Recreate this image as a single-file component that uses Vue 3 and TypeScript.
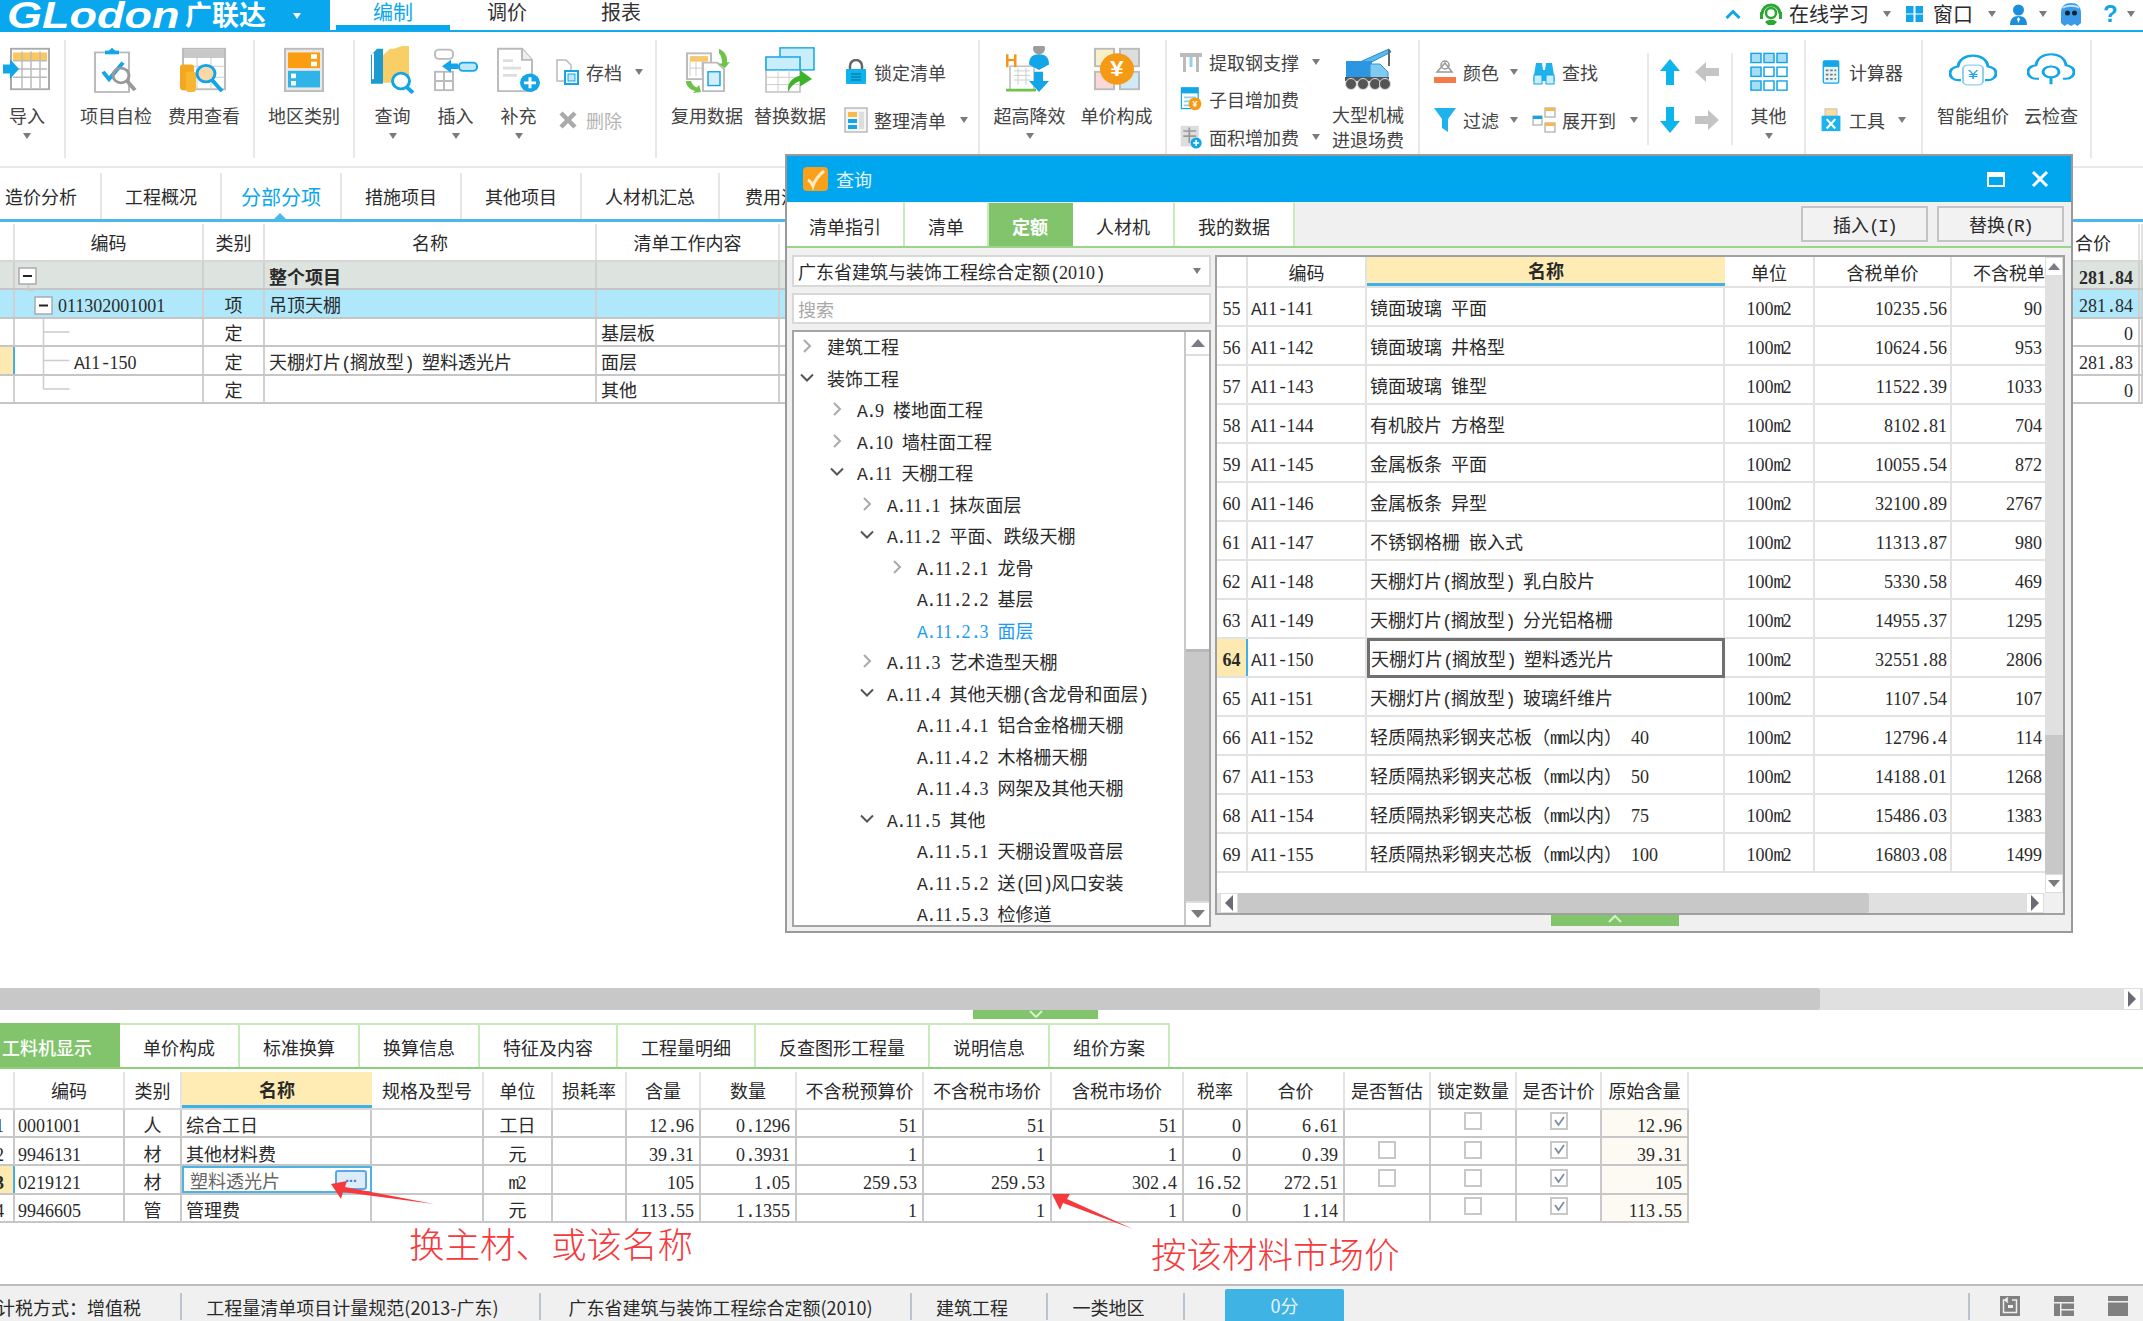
<script setup lang="ts">
import { h } from 'vue'

const Tx = (p: { t: string }) =>
  h(
    'span',
    p.t
      .split(/([\x20-\x7e]+)/)
      .filter((s) => s.length > 0)
      .flatMap((s) =>
        /^[\x20-\x7e]+$/.test(s)
          ? s
              .split(/(\d+)/)
              .filter((d) => d.length > 0)
              .map((d) => h('span', { class: /^\d/.test(d) ? 'dig' : 'lat' }, d))
          : [h('span', s)],
      ),
  )
Tx.props = ['t']

const subTabs = ['造价分析', '工程概况', '分部分项', '措施项目', '其他项目', '人材机汇总', '费用汇总']

const mainRows = [
  { cls: 'r-total', code: '', kind: '', name: '整个项目', work: '', sum: '281.84', mark: false },
  { cls: 'r-sel', code: '011302001001', kind: '项', name: '吊顶天棚', work: '', sum: '281.84', mark: false },
  { cls: '', code: '', kind: '定', name: '', work: '基层板', sum: '0', mark: false },
  { cls: '', code: 'A11-150', kind: '定', name: '天棚灯片(搁放型) 塑料透光片', work: '面层', sum: '281.83', mark: true },
  { cls: '', code: '', kind: '定', name: '', work: '其他', sum: '0', mark: false },
]

const dlgTabs = ['清单指引', '清单', '定额', '人材机', '我的数据']

const tree = [
  { t: '建筑工程', l: 0, c: 'r' },
  { t: '装饰工程', l: 0, c: 'd' },
  { t: 'A.9 楼地面工程', l: 1, c: 'r' },
  { t: 'A.10 墙柱面工程', l: 1, c: 'r' },
  { t: 'A.11 天棚工程', l: 1, c: 'd' },
  { t: 'A.11.1 抹灰面层', l: 2, c: 'r' },
  { t: 'A.11.2 平面、跌级天棚', l: 2, c: 'd' },
  { t: 'A.11.2.1 龙骨', l: 3, c: 'r' },
  { t: 'A.11.2.2 基层', l: 3, c: '' },
  { t: 'A.11.2.3 面层', l: 3, c: '', on: true },
  { t: 'A.11.3 艺术造型天棚', l: 2, c: 'r' },
  { t: 'A.11.4 其他天棚(含龙骨和面层)', l: 2, c: 'd' },
  { t: 'A.11.4.1 铝合金格栅天棚', l: 3, c: '' },
  { t: 'A.11.4.2 木格栅天棚', l: 3, c: '' },
  { t: 'A.11.4.3 网架及其他天棚', l: 3, c: '' },
  { t: 'A.11.5 其他', l: 2, c: 'd' },
  { t: 'A.11.5.1 天棚设置吸音层', l: 3, c: '' },
  { t: 'A.11.5.2 送(回)风口安装', l: 3, c: '' },
  { t: 'A.11.5.3 检修道', l: 3, c: '' },
]

const quotaRows = [
  ['55', 'A11-141', '镜面玻璃 平面', '10235.56', '90'],
  ['56', 'A11-142', '镜面玻璃 井格型', '10624.56', '953'],
  ['57', 'A11-143', '镜面玻璃 锥型', '11522.39', '1033'],
  ['58', 'A11-144', '有机胶片 方格型', '8102.81', '704'],
  ['59', 'A11-145', '金属板条 平面', '10055.54', '872'],
  ['60', 'A11-146', '金属板条 异型', '32100.89', '2767'],
  ['61', 'A11-147', '不锈钢格栅 嵌入式', '11313.87', '980'],
  ['62', 'A11-148', '天棚灯片(搁放型) 乳白胶片', '5330.58', '469'],
  ['63', 'A11-149', '天棚灯片(搁放型) 分光铝格栅', '14955.37', '1295'],
  ['64', 'A11-150', '天棚灯片(搁放型) 塑料透光片', '32551.88', '2806'],
  ['65', 'A11-151', '天棚灯片(搁放型) 玻璃纤维片', '1107.54', '107'],
  ['66', 'A11-152', '轻质隔热彩钢夹芯板（mm以内） 40', '12796.4', '114'],
  ['67', 'A11-153', '轻质隔热彩钢夹芯板（mm以内） 50', '14188.01', '1268'],
  ['68', 'A11-154', '轻质隔热彩钢夹芯板（mm以内） 75', '15486.03', '1383'],
  ['69', 'A11-155', '轻质隔热彩钢夹芯板（mm以内） 100', '16803.08', '1499'],
]

const lowerTabs = ['工料机显示', '单价构成', '标准换算', '换算信息', '特征及内容', '工程量明细', '反查图形工程量', '说明信息', '组价方案']

const resHead = ['', '编码', '类别', '名称', '规格及型号', '单位', '损耗率', '含量', '数量', '不含税预算价', '不含税市场价', '含税市场价', '税率', '合价', '是否暂估', '锁定数量', '是否计价', '原始含量']

const resRows = [
  { no: '1', code: '0001001', kind: '人', name: '综合工日', unit: '工日', nums: ['12.96', '0.1296', '51', '51', '51', '0', '6.61'], est: false, orig: '12.96', sel: false },
  { no: '2', code: '9946131', kind: '材', name: '其他材料费', unit: '元', nums: ['39.31', '0.3931', '1', '1', '1', '0', '0.39'], est: true, orig: '39.31', sel: false },
  { no: '3', code: '0219121', kind: '材', name: '塑料透光片', unit: 'm2', nums: ['105', '1.05', '259.53', '259.53', '302.4', '16.52', '272.51'], est: true, orig: '105', sel: true },
  { no: '4', code: '9946605', kind: '管', name: '管理费', unit: '元', nums: ['113.55', '1.1355', '1', '1', '1', '0', '1.14'], est: false, orig: '113.55', sel: false },
]
</script>

<template>
  <div class="app">
    <!-- title bar -->
    <header class="topbar">
      <div class="logo">
        <span class="logo-en">GLodon</span>
        <span class="logo-cn">广联达</span>
        <i class="tri white"></i>
      </div>
      <div class="maintab on">编制</div>
      <div class="maintab">调价</div>
      <div class="maintab">报表</div>
      <div class="tr">
        <svg class="g0" width="16" height="10" viewBox="0 0 16 10"><path d="M1.5 9 8 2.5 14.500 9" fill="none" stroke="#12a5e8" stroke-width="3"/></svg>
        <svg class="g18" width="24" height="24" viewBox="0 0 24 24"><path d="M3 12a9 9 0 0 1 18 0" fill="none" stroke="#2aa832" stroke-width="3"/><circle cx="12" cy="11" r="5" fill="none" stroke="#2aa832" stroke-width="2.500"/><path d="M6 20c3-3 9-3 12 0l-3 3H9z" fill="#2aa832"/><rect x="1" y="10" width="3" height="7" fill="#2aa832"/><rect x="20" y="10" width="3" height="7" fill="#2aa832"/></svg>
        <span class="g6 trtext">在线学习</span>
        <i class="tri g14"></i>
        <svg class="g15" width="17" height="16" viewBox="0 0 17 16"><rect width="7.500" height="7.500" fill="#12a5e8"/><rect x="9.500" width="7.500" height="7.500" fill="#12a5e8"/><rect y="8.500" width="7.500" height="7.500" fill="#12a5e8"/><rect x="9.500" y="8.500" width="7.500" height="7.500" fill="#12a5e8"/></svg>
        <span class="g10 trtext">窗口</span>
        <i class="tri g15"></i>
        <svg class="g13" width="19" height="21" viewBox="0 0 19 21"><circle cx="9.500" cy="6" r="5.500" fill="#1b8fdd"/><path d="M1 21c0-6 3-9 8.500-9S18 15 18 21z" fill="#1b8fdd"/><path d="M9.500 13l-1.500 2 1.500 4 1.500-4z" fill="#fff"/></svg>
        <i class="tri g11"></i>
        <svg class="g12" width="24" height="25" viewBox="0 0 24 25"><path d="M2 11C2 4 6 1 12 1s10 3 10 10v10l-3.500 3-3-2-3.500 2-3.500-2-3 2L2 21z" fill="#3c9be8"/><circle cx="8.500" cy="11" r="2.500" fill="#123"/><circle cx="15.500" cy="11" r="2.500" fill="#123"/><path d="M4 6c3-3 13-3 16 0" stroke="#bfe0fa" stroke-width="2" fill="none"/></svg>
        <span class="g20 qmark">?</span>
        <i class="tri g14"></i>
      </div>
    </header>

    <!-- ribbon -->
    <section class="ribbon">
      <div class="grp w66">
        <div class="big w54">
          <svg width="48" height="52" viewBox="0 0 48 52"><rect x="8" y="3" width="38" height="44" fill="#fff" stroke="#aaa" stroke-width="2"/><rect x="10" y="7" width="34" height="9" fill="#fbc75e"/><path d="M10 16h34M10 25h34M10 34h34M19 6v40M28 6v40M37 6v40" stroke="#bbb" stroke-width="1.500"/><path d="M0 20h7v-6l9 11-9 11v-6H0z" fill="#12a5e8"/></svg>
          <span class="lb">导入</span><i class="tri"></i>
        </div>
      </div>
      <div class="grp w189 pl6">
        <div class="big w88">
          <svg width="50" height="52" viewBox="0 0 50 52"><rect x="4" y="7" width="34" height="43" fill="#fff" stroke="#bbb" stroke-width="2"/><path d="M16 7l5-5 5 5z" fill="#12a5e8"/><rect x="14" y="5" width="14" height="4" fill="#12a5e8"/><path d="M12 28l6 8 14-18" fill="none" stroke="#12a5e8" stroke-width="4"/><circle cx="30" cy="32" r="8" fill="none" stroke="#999" stroke-width="3"/><path d="M36 38l8 10" stroke="#999" stroke-width="4"/></svg>
          <span class="lb">项目自检</span>
        </div>
        <div class="big w88">
          <svg width="50" height="52" viewBox="0 0 50 52"><rect x="4" y="3" width="42" height="44" fill="#fff" stroke="#bbb" stroke-width="2"/><rect x="5" y="4" width="40" height="9" fill="#c8c8c8"/><path d="M4 22h42M4 34h42M18 13v34M32 13v34" stroke="#ccc"/><rect x="1" y="20" width="14" height="28" rx="3" fill="#f4a81f"/><rect x="7" y="28" width="10" height="22" rx="3" fill="#f8b730"/><circle cx="27" cy="30" r="9" fill="#fbd8a8" stroke="#12a5e8" stroke-width="3"/><path d="M33 37l10 12" stroke="#12a5e8" stroke-width="4"/></svg>
          <span class="lb">费用查看</span>
        </div>
      </div>
      <div class="grp w100">
        <div class="big w100i">
          <svg width="40" height="52" viewBox="0 0 40 52"><rect x="1" y="3" width="38" height="46" fill="#e8e8e8" stroke="#bbb" stroke-width="2"/><rect x="4" y="7" width="32" height="17" fill="#fb9d10"/><rect x="27" y="9" width="6" height="5" fill="#fff"/><rect x="27" y="17" width="6" height="5" fill="#fff"/><rect x="4" y="27" width="32" height="18" fill="#2fb4e8"/><rect x="7" y="30" width="5" height="5" fill="#fff"/><rect x="7" y="38" width="5" height="5" fill="#fff"/></svg>
          <span class="lb">地区类别</span>
        </div>
      </div>
      <div class="grp w302 pl6">
        <div class="big w63">
          <svg width="48" height="52" viewBox="0 0 48 52"><path d="M2 10 8 3h6v38H2z" fill="#1d9bd0"/><rect x="3" y="8" width="2" height="28" fill="#fff"/><path d="M14 10l7-7h4l8-3h7v40H14z" fill="#f7cf66"/><circle cx="32" cy="38" r="8.500" fill="#fff" stroke="#12a5e8" stroke-width="3"/><path d="M38 45l6 6" stroke="#12a5e8" stroke-width="4"/></svg>
          <span class="lb">查询</span><i class="tri"></i>
        </div>
        <div class="big w63">
          <svg width="46" height="52" viewBox="0 0 46 52"><rect x="2" y="4" width="18" height="10" rx="4" fill="#fff" stroke="#bbb" stroke-width="2"/><rect x="2" y="28" width="18" height="20" fill="#fff" stroke="#bbb" stroke-width="2"/><path d="M2 38h18M11 28v20" stroke="#bbb" stroke-width="2"/><rect x="26" y="18" width="18" height="9" rx="4" fill="#bfe8fa" stroke="#12a5e8" stroke-width="2"/><path d="M9 22l9-7v4h7v6h-7v4z" fill="#12a5e8"/></svg>
          <span class="lb">插入</span><i class="tri"></i>
        </div>
        <div class="big w63">
          <svg width="46" height="52" viewBox="0 0 46 52"><path d="M2 3h24l10 12v34H2z" fill="#fff" stroke="#bbb" stroke-width="2"/><path d="M26 3v12h10" fill="#eee" stroke="#bbb" stroke-width="2"/><path d="M7 16h10M7 24h18M7 32h14" stroke="#ddd" stroke-width="3"/><circle cx="34" cy="40" r="10" fill="#12a5e8"/><path d="M34 34v12M28 40h12" stroke="#fff" stroke-width="3"/></svg>
          <span class="lb">补充</span><i class="tri"></i>
        </div>
        <div class="col ml6">
          <div class="sm">
            <span class="ic"><svg width="24" height="26" viewBox="0 0 24 26"><path d="M1 1h9l5 5v16H1z" fill="#fff" stroke="#bbb" stroke-width="1.500"/><rect x="9" y="12" width="13" height="13" fill="#fff" stroke="#12a5e8" stroke-width="2"/><rect x="12" y="15" width="7" height="7" fill="#bfe8fa" stroke="#12a5e8"/></svg></span>
            <span>存档</span><i class="tri ml12"></i>
          </div>
          <div class="sm dis">
            <span class="ic"><svg width="20" height="20" viewBox="0 0 20 20"><path d="M3 3l14 14M17 3 3 17" stroke="#aaa" stroke-width="4.500"/></svg></span>
            <span>删除</span>
          </div>
        </div>
      </div>
      <div class="grp w323 pl8">
        <div class="big w83">
          <svg width="52" height="52" viewBox="0 0 52 52"><rect x="6" y="8" width="24" height="28" fill="#fff" stroke="#bbb" stroke-width="2"/><rect x="9" y="11" width="18" height="6" fill="#fbc75e"/><path d="M9 17v16M15 11v22M21 11v22M9 24h18" stroke="#ccc"/><path d="M22 18h14l7 7v24H22z" fill="#fff" stroke="#bbb" stroke-width="2"/><rect x="27" y="28" width="12" height="15" fill="#d5effa" stroke="#12a5e8" stroke-width="1.500"/><path d="M38 3c6 3 9 9 8 15l3-1-5 7-7-5 4 0c0-5-1-9-3-11z" fill="#6fc24a"/><path d="M5 38c0 5 3 9 9 11l-2 2 8-1-2-8-2 3c-3-1-5-4-6-7z" fill="#6fc24a"/></svg>
          <span class="lb">复用数据</span>
        </div>
        <div class="big w83">
          <svg width="52" height="52" viewBox="0 0 52 52"><rect x="16" y="2" width="34" height="24" fill="#c8edfb" stroke="#12a5e8" stroke-width="1.500"/><rect x="2" y="12" width="34" height="38" fill="#fff" stroke="#bbb" stroke-width="1.500"/><rect x="2" y="12" width="34" height="14" fill="#c8edfb" stroke="#12a5e8" stroke-width="1.500"/><path d="M2 34h34M2 42h34M14 26v24M25 26v24" stroke="#ccc"/><path d="M24 50c-1-9 3-15 12-18v-6l12 10-12 8v-6c-4 1-9 5-12 12z" fill="#3db32a"/></svg>
          <span class="lb">替换数据</span>
        </div>
        <div class="col ml12">
          <div class="sm">
            <span class="ic"><svg width="22" height="26" viewBox="0 0 22 26"><path d="M5 11V7a6 6 0 0 1 12 0v4" fill="none" stroke="#666" stroke-width="2.500"/><rect x="1" y="10" width="20" height="15" rx="1" fill="#0eb4ec"/><path d="M6 15h10M6 18h10M6 21h10" stroke="#09669a"/></svg></span>
            <span>锁定清单</span>
          </div>
          <div class="sm">
            <span class="ic"><svg width="24" height="26" viewBox="0 0 24 26"><rect x="1" y="1" width="22" height="24" fill="#f5f5f5" stroke="#bbb" stroke-width="1.500"/><rect x="4" y="5" width="9" height="5" fill="#f8b84a"/><rect x="4" y="12" width="9" height="4" fill="#12a5e8"/><rect x="4" y="18" width="9" height="4" fill="#12a5e8"/><rect x="15" y="5" width="5" height="17" fill="#ddd"/></svg></span>
            <span>整理清单</span><i class="tri ml14"></i>
          </div>
        </div>
      </div>
      <div class="grp w187 pl6">
        <div class="big w87">
          <svg width="48" height="52" viewBox="0 0 48 52"><rect x="4" y="22" width="24" height="26" fill="#fff" stroke="#bbb" stroke-width="1.500"/><path d="M8 27h16M8 32h16M8 37h16M12 24v18M20 24v18" stroke="#ccc"/><path d="M0 48h30" stroke="#6fc24a" stroke-width="3"/><rect x="0" y="9" width="2.500" height="14" fill="#f5961c"/><rect x="8" y="9" width="2.500" height="14" fill="#f5961c"/><rect x="0" y="14" width="10" height="2.500" fill="#f5961c"/><circle cx="33" cy="3" r="6" fill="#9c9c9c"/><path d="M23 20c0-8 4-11 10-11s10 3 10 11l-10 6z" fill="#12a5e8"/><path d="M28 28h9v10h6l-10 12-10-12h5z" fill="#12a5e8"/></svg>
          <span class="lb">超高降效</span><i class="tri"></i>
        </div>
        <div class="big w87">
          <svg width="46" height="52" viewBox="0 0 46 52"><rect x="1" y="3" width="19" height="19" fill="#f8eec8" stroke="#bbb" stroke-width="2"/><rect x="26" y="3" width="19" height="19" fill="#ddd" stroke="#bbb" stroke-width="2"/><rect x="1" y="28" width="19" height="19" fill="#fad8d8" stroke="#bbb" stroke-width="2"/><rect x="26" y="28" width="19" height="19" fill="#d0eaf5" stroke="#bbb" stroke-width="2"/><circle cx="23" cy="25" r="17" fill="#f59a14"/><text x="23" y="33" text-anchor="middle" font-size="24" font-weight="700" fill="#fff" font-family="Liberation Sans, sans-serif">¥</text></svg>
          <span class="lb">单价构成</span>
        </div>
      </div>
      <div class="grp w253 pl12">
        <div class="col three">
          <div class="sm s3">
            <span class="ic"><svg width="24" height="24" viewBox="0 0 24 24"><path d="M1 3h22v4H1z" fill="#bbb"/><rect x="4" y="7" width="3" height="15" fill="#bbb"/><rect x="17" y="7" width="3" height="15" fill="#bbb"/><rect x="10.500" y="7" width="3" height="10" fill="#8fd0ef"/></svg></span>
            <span>提取钢支撑</span><i class="tri ml13"></i>
          </div>
          <div class="sm s3">
            <span class="ic"><svg width="26" height="24" viewBox="0 0 26 30"><rect x="1" y="1" width="21" height="26" fill="#fff" stroke="#12a5e8" stroke-width="1.500"/><rect x="1" y="1" width="21" height="7" fill="#12a5e8"/><path d="M4 13h15M4 18h15M4 23h8" stroke="#8fd0ef" stroke-width="2"/><circle cx="18" cy="21" r="8" fill="#f59a14"/><text x="18" y="25" text-anchor="middle" font-size="11" font-weight="700" fill="#fff" font-family="Liberation Sans, sans-serif">¥</text></svg></span>
            <span>子目增加费</span>
          </div>
          <div class="sm s3">
            <span class="ic"><svg width="26" height="24" viewBox="0 0 26 28"><rect x="1" y="1" width="21" height="24" fill="#ddd"/><path d="M4 7h15M4 13h15M11 3v18" stroke="#999" stroke-width="2"/><circle cx="19" cy="21" r="6.500" fill="#12a5e8"/><path d="M19 17.500v7M15.500 21h7" stroke="#fff" stroke-width="2"/></svg></span>
            <span>面积增加费</span><i class="tri ml13"></i>
          </div>
        </div>
        <div class="big w88 mla mr6 crane">
          <svg width="50" height="44" viewBox="0 0 50 44"><path d="M17 14 46 1l2 3-29 15z" fill="#5fb8e8" stroke="#1b8fdd"/><rect x="45" y="2" width="2" height="16" fill="#666"/><rect x="3" y="13" width="26" height="17" fill="#2d96e0"/><path d="M27 16h10l8 8v7H27z" fill="#7ecaf2" stroke="#2d96e0"/><rect x="2" y="29" width="44" height="4" fill="#555"/><circle cx="8" cy="36" r="5.500" fill="#555" stroke="#ddd"/><circle cx="20" cy="36" r="5.500" fill="#555" stroke="#ddd"/><circle cx="32" cy="36" r="5.500" fill="#555" stroke="#ddd"/><circle cx="42" cy="36" r="5.500" fill="#555" stroke="#ddd"/></svg>
          <span class="lb lb2">大型机械<br />进退场费</span>
        </div>
      </div>
      <div class="grp w386 pl13">
        <div class="col w99">
          <div class="sm">
            <span class="ic"><svg width="24" height="24" viewBox="0 0 24 24"><path d="M4 12 12 3l7 9z" fill="#fff" stroke="#999" stroke-width="1.500"/><circle cx="12" cy="5" r="4" fill="none" stroke="#999" stroke-width="1.500"/><path d="M1 17h22v6H1z" fill="#f47a4a"/></svg></span>
            <span>颜色</span><i class="tri ml11"></i>
          </div>
          <div class="sm">
            <span class="ic"><svg width="22" height="26" viewBox="0 0 22 26"><path d="M0 1h22l-8 11v13l-6-4v-9z" fill="#1fb3ee"/></svg></span>
            <span>过滤</span><i class="tri ml11"></i>
          </div>
        </div>
        <div class="col w115">
          <div class="sm">
            <span class="ic"><svg width="24" height="26" viewBox="0 0 24 26"><path d="M1 22 4 4h6l1 7h2l1-7h6l3 18z" fill="#1fb3ee"/><rect x="2" y="16" width="8" height="9" fill="#c8edfb" stroke="#12a5e8"/><rect x="14" y="16" width="8" height="9" fill="#c8edfb" stroke="#12a5e8"/></svg></span>
            <span>查找</span>
          </div>
          <div class="sm">
            <span class="ic"><svg width="24" height="28" viewBox="0 0 24 28"><rect x="1" y="10" width="9" height="9" fill="#fff" stroke="#999"/><rect x="13" y="2" width="10" height="9" fill="#fff" stroke="#999"/><rect x="13" y="2" width="10" height="3" fill="#f8b84a"/><rect x="13" y="17" width="10" height="9" fill="#fff" stroke="#999"/><rect x="13" y="17" width="10" height="3" fill="#f8b84a"/><rect x="1" y="10" width="9" height="3" fill="#12a5e8"/></svg></span>
            <span>展开到</span><i class="tri ml14"></i>
          </div>
        </div>
        <div class="vsep"></div>
        <div class="arrows">
          <svg width="20" height="26" viewBox="0 0 20 26"><path d="M10 0l10 12h-6v14H6V12H0z" fill="#0eb4ec"/></svg>
          <svg width="24" height="20" viewBox="0 0 24 20"><path d="M0 10 11 0v6h13v8H11v6z" fill="#c4c4c4"/></svg>
          <svg width="20" height="26" viewBox="0 0 20 26"><path d="M10 26 0 14h6V0h8v14h6z" fill="#0eb4ec"/></svg>
          <svg width="24" height="20" viewBox="0 0 24 20"><path d="M24 10 13 0v6H0v8h13v6z" fill="#c4c4c4"/></svg>
        </div>
        <div class="vsep"></div>
        <div class="big w71 wide-grid">
          <svg width="38" height="52" viewBox="0 0 38 52"><g fill="none" stroke="#12a5e8" stroke-width="1.500"><rect x="1" y="8" width="10" height="10" fill="#a9dcf5"/><rect x="14" y="8" width="10" height="10" fill="#a9dcf5"/><rect x="27" y="8" width="10" height="10" fill="#a9dcf5"/><rect x="1" y="23" width="10" height="10" fill="#a9dcf5"/><rect x="14" y="23" width="10" height="10"/><rect x="27" y="23" width="10" height="10"/><rect x="1" y="38" width="10" height="10" fill="#a9dcf5"/><rect x="14" y="38" width="10" height="10"/><rect x="27" y="38" width="10" height="10"/></g></svg>
          <span class="lb">其他</span><i class="tri"></i>
        </div>
      </div>
      <div class="grp w117 pl13">
        <div class="col">
          <div class="sm">
            <span class="ic"><svg width="20" height="24" viewBox="0 0 20 28"><rect x="1" y="1" width="18" height="26" rx="2" fill="#e3f4fc" stroke="#12a5e8" stroke-width="1.500"/><rect x="1" y="1" width="18" height="7" fill="#12a5e8"/><path d="M4 12h3M9 12h3M14 12h2M4 17h3M9 17h3M14 17h2M4 22h3M9 22h3M14 22h2" stroke="#777" stroke-width="2"/></svg></span>
            <span>计算器</span>
          </div>
          <div class="sm">
            <span class="ic"><svg width="24" height="24" viewBox="0 0 24 28"><rect x="5" y="1" width="14" height="12" fill="#f9dca0" stroke="#bbb"/><rect x="1" y="9" width="22" height="18" fill="#1fb3ee"/><path d="M7 13l10 11M17 13 7 24" stroke="#fff" stroke-width="2.500"/></svg></span>
            <span>工具</span><i class="tri ml13"></i>
          </div>
        </div>
      </div>
      <div class="grp w169 pl11">
        <div class="big w78">
          <svg width="48" height="52" viewBox="0 0 48 52"><g transform="translate(0 6) scale(1 .74)"><path d="M12 42H9C4 42 1 37 1 32c0-6 4-9 8-10C10 12 16 6 24 6s14 6 15 16c4 1 8 4 8 10 0 5-3 10-8 10h-3" fill="none" stroke="#12a5e8" stroke-width="3"/><rect x="14" y="20" width="20" height="29" rx="5" fill="#fff" stroke="#8fd0ef" stroke-width="2"/><text x="24" y="41" text-anchor="middle" font-size="18" fill="#12a5e8" font-family="Liberation Sans, sans-serif">¥</text></g></svg>
          <span class="lb">智能组价</span>
        </div>
        <div class="big w78">
          <svg width="48" height="52" viewBox="0 0 48 52"><g transform="translate(0 6) scale(1 .74)"><path d="M12 40H9C4 40 1 35 1 30c0-6 4-9 8-10C10 10 16 4 24 4s14 6 15 16c4 1 8 4 8 10 0 5-3 10-8 10h-3" fill="none" stroke="#12a5e8" stroke-width="3"/><circle cx="24" cy="30" r="8" fill="#fff" stroke="#12a5e8" stroke-width="3"/><path d="M24 38v10" stroke="#12a5e8" stroke-width="3"/></g></svg>
          <span class="lb">云检查</span>
        </div>
      </div>
    </section>

    <!-- view tabs -->
    <nav class="subtabs">
      <div v-for="(t, i) in subTabs" :key="t" class="subtab" :class="'st' + i">{{ t }}</div>
    </nav>

    <!-- main table -->
    <main class="main-area">
      <div class="mt-head mt-grid">
        <div class="c"></div><div class="c ctr">编码</div><div class="c ctr">类别</div><div class="c ctr">名称</div><div class="c ctr">清单工作内容</div><div class="c"></div><div class="c hsum">合价</div><div class="c"></div>
      </div>
      <div v-for="(r, i) in mainRows" :key="i" class="mt-row mt-grid" :class="r.cls">
        <div class="c" :class="{ marker: r.mark }"></div>
        <div class="c codecell" :class="'cc' + i"><Tx :t="r.code" /></div>
        <div class="c ctr">{{ r.kind }}</div>
        <div class="c txt"><Tx :t="r.name" /></div>
        <div class="c txt">{{ r.work }}</div>
        <div class="c"></div>
        <div class="c num"><Tx :t="r.sum" /></div>
        <div class="c"></div>
      </div>
      <svg class="treelines" width="70" height="150" viewBox="0 0 70 150">
        <path d="M13.500 22v7.500h5M28.500 58v70M28.500 71h26M28.500 99.500h26M28.500 128h26" fill="none" stroke="#ccc" stroke-width="1.500"/>
        <rect x="4" y="7" width="17" height="16" fill="#fff" stroke="#aaa" stroke-width="1.500"/><path d="M8 15h9" stroke="#222" stroke-width="2"/>
        <rect x="20" y="36" width="17" height="17" fill="#fff" stroke="#aaa" stroke-width="1.500"/><path d="M24 44.500h9" stroke="#222" stroke-width="2"/>
      </svg>
    </main>

    <!-- horizontal scrollbar -->
    <div class="hbar">
      <div class="hthumb"></div>
      <div class="sbtn"><i class="tri-r"></i></div>
    </div>
    <div class="handle-row"><div class="handle"><svg width="16" height="8" viewBox="0 0 16 8"><path d="M2 1l6 6 6-6" fill="none" stroke="#d8f0cc" stroke-width="2"/></svg></div></div>

    <!-- lower tabs -->
    <nav class="lowtabs">
      <div v-for="(t, i) in lowerTabs" :key="t" class="lowtab" :class="'lt' + i">{{ t }}</div>
    </nav>

    <!-- resource table -->
    <div class="res">
      <div class="res-grid res-head">
        <div v-for="(t, i) in resHead" :key="i" class="c ctr" :class="{ yhead: t === '名称' }">{{ t }}</div>
      </div>
      <div v-for="r in resRows" :key="r.no" class="res-grid res-row">
        <div class="c no" :class="{ noSel: r.sel }"><Tx :t="r.no" /></div>
        <div class="c codeL"><Tx :t="r.code" /></div>
        <div class="c ctr">{{ r.kind }}</div>
        <div v-if="r.sel" class="c editing">
          <span>{{ r.name }}</span><span class="dots">...</span>
        </div>
        <div v-else class="c txt">{{ r.name }}</div>
        <div class="c"></div>
        <div class="c ctr"><Tx :t="r.unit" /></div>
        <div class="c"></div>
        <div v-for="(n, j) in r.nums" :key="j" class="c num"><Tx :t="n" /></div>
        <div class="c ctr"><span v-if="r.est" class="cb"></span></div>
        <div class="c ctr"><span class="cb"></span></div>
        <div class="c ctr"><span class="cb"><svg width="14" height="13" viewBox="0 0 14 13"><path d="M3 5l3.500 5L12 2" fill="none" stroke="#7d8da3" stroke-width="1.800"/></svg></span></div>
        <div class="c num orig"><Tx :t="r.orig" /></div>
      </div>
    </div>

    <div class="bottom-gap"></div>

    <!-- status bar -->
    <footer class="status">
      <div class="si s0">计税方式：增值税</div>
      <div class="si s1">工程量清单项目计量规范(2013-广东)</div>
      <div class="si s2">广东省建筑与装饰工程综合定额(2010)</div>
      <div class="si s3i">建筑工程</div>
      <div class="si s4">一类地区</div>
      <div class="score">0分</div>
      <div class="sright">
        <svg width="20" height="20" viewBox="0 0 20 20"><rect width="20" height="20" fill="#808080"/><path d="M8 4H3.500v12.500h13V4H12M8 1.500 5 4l3 2.500" fill="none" stroke="#f0f0f0" stroke-width="1.500"/><rect x="8" y="9" width="5" height="3" fill="#f0f0f0"/></svg>
        <svg width="20" height="20" viewBox="0 0 20 20"><rect width="20" height="6" fill="#808080"/><rect y="7.500" width="6" height="12.500" fill="#808080"/><rect x="7.500" y="7.500" width="12.500" height="5.500" fill="#808080"/><rect x="7.500" y="14.500" width="12.500" height="5.500" fill="#808080"/></svg>
        <svg width="20" height="20" viewBox="0 0 20 20"><rect width="20" height="5" fill="#808080"/><rect y="6.500" width="20" height="13.500" fill="#808080"/></svg>
      </div>
    </footer>

    <!-- annotations -->
    <svg class="anno a1" width="110" height="30" viewBox="0 0 110 30"><path d="M2 3 18 0 16 6 105 23 14 11 12 18z" fill="#f5393c"/></svg>
    <div class="note n1">换主材、或该名称</div>
    <svg class="anno a2" width="86" height="40" viewBox="0 0 86 40"><path d="M1 1 19 1 16 6 82 36 12 10 9 17z" fill="#f5393c"/></svg>
    <div class="note n2">按该材料市场价</div>

    <!-- dialog -->
    <section class="dialog">
      <div class="dtitle">
        <svg width="25" height="24" viewBox="0 0 25 24"><rect width="25" height="24" rx="4" fill="#f9a11b"/><path d="M5 13c2 1 4 3 5 6C12 13 16 8 21 4" fill="none" stroke="#fdebc5" stroke-width="3"/></svg>
        <span class="dname">查询</span>
        <svg class="dmax" width="18" height="15" viewBox="0 0 18 15"><rect x="1" y="1" width="16" height="13" fill="none" stroke="#fff" stroke-width="2"/><rect x="1" y="1" width="16" height="4" fill="#fff"/></svg>
        <svg class="dclose" width="18" height="16" viewBox="0 0 18 16"><path d="M2 1l14 14M16 1 2 15" stroke="#fff" stroke-width="3"/></svg>
      </div>
      <div class="dtabs">
        <div v-for="(t, i) in dlgTabs" :key="t" class="dtab" :class="'dt' + i">{{ t }}</div>
        <div class="dbtns">
          <div class="dbtn"><Tx t="插入(I)" /></div>
          <div class="dbtn"><Tx t="替换(R)" /></div>
        </div>
      </div>
      <div class="dbody">
        <div class="dleft">
          <div class="field sel"><Tx t="广东省建筑与装饰工程综合定额(2010)" /><i class="tri"></i></div>
          <div class="field search">搜索</div>
          <div class="tree">
            <div class="tree-list">
              <div v-for="n in tree" :key="n.t" class="tnode" :class="['l' + n.l, { on: n.on }]">
                <span class="chev">
                  <svg v-if="n.c === 'r'" width="10" height="16" viewBox="0 0 10 16"><path d="M2 2l6 6-6 6" fill="none" stroke="#aaa" stroke-width="2"/></svg>
                  <svg v-if="n.c === 'd'" width="14" height="10" viewBox="0 0 14 10"><path d="M1 1.500l6 6 6-6" fill="none" stroke="#555" stroke-width="2"/></svg>
                </span>
                <Tx :t="n.t" />
              </div>
            </div>
            <div class="tscroll">
              <div class="tbtn"><i class="tri-u"></i></div>
              <div class="ttrack"></div>
              <div class="tthumb"></div>
              <div class="tbtn"><i class="tri"></i></div>
            </div>
          </div>
        </div>
        <div class="dright">
          <div class="qtable">
            <div class="qmain">
              <div class="qhead q-grid">
                <div class="qc"></div><div class="qc ctr">编码</div><div class="qc ctr yname">名称</div><div class="qc ctr">单位</div><div class="qc ctr">含税单价</div><div class="qc ctr clipL">不含税单价</div>
              </div>
              <div v-for="r in quotaRows" :key="r[0]" class="qrow q-grid" :class="{ cur: r[0] === '64' }">
                <div class="qc ctr qno"><Tx :t="r[0]" /></div>
                <div class="qc qcode"><Tx :t="r[1]" /></div>
                <div class="qc qname"><Tx :t="r[2]" /></div>
                <div class="qc ctr"><Tx t="100m2" /></div>
                <div class="qc qnum"><Tx :t="r[3]" /></div>
                <div class="qc qnum"><Tx :t="r[4]" /></div>
              </div>
            </div>
            <div class="qv">
              <div class="qvbtn"><i class="tri-u"></i></div>
              <div class="qvtrack"></div>
              <div class="qvthumb"></div>
              <div class="qvbtn"><i class="tri"></i></div>
            </div>
          </div>
          <div class="qh">
            <div class="qhbtn"><i class="tri-l"></i></div>
            <div class="qhthumb"></div>
            <div class="qhtrack"></div>
            <div class="qhbtn"><i class="tri-r"></i></div>
            <div class="qhcorner"></div>
          </div>
        </div>
      </div>
      <div class="dhandle"><svg width="16" height="8" viewBox="0 0 16 8"><path d="M2 7l6-6 6 6" fill="none" stroke="#d8f0cc" stroke-width="2"/></svg></div>
    </section>
  </div>
</template>

<style scoped>
.app {
  position: relative;
  width: 2143px;
  height: 1321px;
  overflow: hidden;
  display: flex;
  flex-direction: column;
  background: #fff;
  color: #2a2a2a;
  font-family: "Noto Sans CJK SC", "Liberation Sans", sans-serif;
  font-size: 18px;
}
* { box-sizing: border-box; }
i { display: block; font-style: normal; }

.tri { width: 0; height: 0; border-left: 4.5px solid transparent; border-right: 4.5px solid transparent; border-top: 6px solid #7b7b7b; flex: none; }
.tri.white { border-top-color: #fff; margin-left: 12px; }
.tri-u { width: 0; height: 0; border-left: 7px solid transparent; border-right: 7px solid transparent; border-bottom: 8px solid #7b7b8b; }
.tri-r { width: 0; height: 0; border-top: 8px solid transparent; border-bottom: 8px solid transparent; border-left: 8px solid #6b6b75; }
.tri-l { width: 0; height: 0; border-top: 8px solid transparent; border-bottom: 8px solid transparent; border-right: 8px solid #6b6b75; }

/* top bar */
.topbar { height: 32px; display: flex; flex: none; border-bottom: 2px solid #12a9ef; margin-bottom: 0; }
.logo { width: 330px; height: 32px; background: #08a7ee; color: #fff; display: flex; align-items: center; padding-left: 7px; overflow: hidden; }
.logo-en { display: block; width: 178px; font: italic 700 36px/30px "Liberation Sans", sans-serif; transform: scaleX(1.25); transform-origin: left center; }
.logo-cn { font-size: 27px; line-height: 28px; font-weight: 700; margin-top: -4px; width: 90px; }
.logo .tri { margin-left: 18px; }
.maintab { width: 114px; margin-left: 0; height: 30px; line-height: 23px; text-align: center; font-size: 20px; color: #333; }
.logo + .maintab { margin-left: 6px; }
.maintab.on { color: #08a7ee; border-bottom: 5px solid #08a7ee; }
.tr { margin-left: auto; display: flex; align-items: center; height: 28px; padding-right: 8px; }
.trtext { font-size: 20px; line-height: 28px; }
.qmark { color: #12a5e8; font: 700 24px/24px "Liberation Sans", sans-serif; width: 10px; text-align: center; }
.g0 { margin-left: 0; } .g6 { margin-left: 6px; } .g10 { margin-left: 10px; } .g11 { margin-left: 11px; } .g12 { margin-left: 12px; } .g13 { margin-left: 13px; } .g14 { margin-left: 14px; } .g15 { margin-left: 15px; } .g18 { margin-left: 18px; } .g20 { margin-left: 20px; }

/* ribbon */
.ribbon { flex: none; height: 136px; display: flex; border-bottom: 2px solid #e8e8e8; color: #444; }
.grp { margin-top: 8px; height: 118px; display: flex; border-right: 2px solid #e8e8e8; flex: none; }
.w66 { width: 66px; } .w189 { width: 189px; } .w100 { width: 100px; } .w302 { width: 302px; } .w323 { width: 323px; } .w187 { width: 187px; } .w253 { width: 253px; } .w386 { width: 386px; } .w117 { width: 117px; } .w169 { width: 169px; }
.pl6 { padding-left: 6px; } .pl8 { padding-left: 8.5px; } .pl11 { padding-left: 11px; } .pl12 { padding-left: 12px; } .pl13 { padding-left: 13px; }
.big { display: flex; flex-direction: column; align-items: center; padding-top: 6px; flex: none; }
.big > svg { height: 52px; flex: none; transform: scaleY(0.92); transform-origin: top; }
.crane > svg { height: 44px; transform: none; margin-top: 2px; margin-bottom: 6px; }
.lb { margin-top: 4px; line-height: 26px; white-space: nowrap; text-align: center; }
.lb2 { line-height: 25px; }
.big .tri { margin-top: 5px; }
.w54 { width: 54px; } .w63 { width: 63px; } .w71 { width: 71px; } .w78 { width: 78px; } .w83 { width: 83px; } .w87 { width: 87px; } .w88 { width: 88px; } .w100i { width: 98px; } .w99 { width: 99px; } .w115 { width: 115px; }
.ml6 { margin-left: 6px; } .ml11 { margin-left: 11px; } .ml12 { margin-left: 12.5px; } .ml13 { margin-left: 13px; } .ml14 { margin-left: 14px; } .mla { margin-left: auto; } .mr6 { margin-right: 6px; }
.col { display: flex; flex-direction: column; padding-top: 8px; flex: none; }
.col.three { padding-top: 3px; }
.sm { height: 48px; display: flex; align-items: center; white-space: nowrap; }
.sm.s3 { height: 37.5px; }
.sm.dis { color: #b4b4b4; }
.ic { width: 24px; margin-right: 6px; display: flex; justify-content: center; flex: none; }
.ic svg { flex: none; }
.vsep { width: 2px; height: 92px; margin-top: 13px; background: #e8e8e8; flex: none; }
.arrows { width: 82px; display: grid; grid-template-columns: 42px 32px; grid-auto-rows: 48px; padding-top: 8px; place-items: center; align-content: start; }

/* sub tabs */
.subtabs { flex: none; margin-top: 5px; height: 49px; display: flex; border-bottom: 3px solid #4cb8e8; }
.subtab { width: 120px; height: 46px; border-right: 2px solid #e6e6e6; display: flex; align-items: center; justify-content: center; flex: none; position: relative; }
.st0 { width: 102px; padding-right: 18px; }
.st2 { color: #08a7ee; font-size: 20px; }
.st2::after { content: ""; position: absolute; left: 52px; bottom: 0; border-left: 6px solid transparent; border-right: 6px solid transparent; border-bottom: 6px solid #4cb8e8; }
.st5 { width: 138px; }
.st6 { width: auto; padding-left: 25px; border: 0; }

/* main table */
.main-area { flex: 1; min-height: 0; position: relative; padding-top: 2px; }
.mt-grid { display: grid; grid-template-columns: 15px 189px 61px 332px 183px 1293px 67px 3px; }
.c { border-right: 2px solid #d6d6d6; display: flex; align-items: center; min-width: 0; white-space: nowrap; overflow: hidden; }
.ctr { justify-content: center; }
.txt { padding-left: 4px; white-space: pre; }
.num { justify-content: flex-end; padding-right: 5px; }
.hsum { padding-left: 2px; }
.mt-head { height: 38px; border-bottom: 2px solid #d6d6d6; }
.mt-head .c { border-right-color: #e2e2e2; }
.mt-row { height: 28.4px; border-bottom: 2px solid #c6c6c6; }
.mt-row .c { border-right-color: #d0d0d0; padding-top: 1px; }
.r-total { background: #dde4df; font-weight: 700; }
.r-sel { background: #aee8fa; }
.marker { background: #feeab0; border-right: 2px solid #3fb0e8 !important; }
.codecell { padding-left: 43px; }
.cc3 { padding-left: 59px; }
.treelines { position: absolute; left: 15px; top: 39px; }

/* scrollbar */
.hbar { flex: none; height: 22px; background: #e0e0e0; display: flex; justify-content: space-between; padding-right: 2px; }
.hthumb { width: 1820px; background: #c8c8c8; border-radius: 0 3px 3px 0; }
.sbtn { width: 18px; background: #fff; border: 1px solid #ddd; display: flex; align-items: center; justify-content: center; }
.handle-row { flex: none; height: 13px; }
.handle { margin-left: 973px; width: 125px; height: 9px; background: #82c46c; display: flex; justify-content: center; }

/* lower tabs */
.lowtabs { flex: none; height: 46px; display: flex; border-bottom: 2px solid #8ed07a; }
.lowtab { width: 120px; height: 44px; border-top: 2px solid #c8ebba; border-right: 2px solid #c8ebba; display: flex; align-items: center; justify-content: center; flex: none; padding-top: 2px; }
.lt0 { background: #82c46c; color: #fff; border-color: #82c46c; font-size: 18px; justify-content: flex-start; padding-left: 2px; font-weight: 500; }
.lt4, .lt5 { width: 138px; }
.lt6 { width: 174px; }

/* resource table */
.res { flex: none; width: 1689px; margin-top: 3px; }
.res-grid { display: grid; grid-template-columns: 15px 110px 57px 190px 112px 69px 74px 74px 96px 127px 128px 132px 64px 97px 86px 86px 85px 87px; }
.res-head { height: 38px; border-bottom: 2px solid #d8d8d8; }
.res-head .c { border-right-color: #e4e4e4; padding-top: 1px; }
.yhead { background: #feecb4; border-bottom: 3px solid #3fb0e8; font-weight: 700; border-right: 0 !important; }
.res-row { height: 28.3px; border-bottom: 2px solid #c6c6c6; }
.res-row .c { border-right-color: #c9c9c9; padding-top: 3px; }
.res-row .c.ctr:has(.cb) { padding-top: 0; }
.no { justify-content: flex-start; text-indent: -5px; }
.noSel { background: #feeab0; border-right: 2px solid #3fb0e8 !important; font-weight: 700; }
.codeL { padding-left: 3px; }
.res-row .editing { border: 2px solid #4cb4e4; padding: 0 3px 0 6px; justify-content: space-between; color: #666; }
.dots { width: 32px; height: 20px; border: 2px solid #5aa8e8; border-radius: 3px; background: #dcecf8; color: #3a7fc8; font: 700 14px/10px "Liberation Sans", sans-serif; text-align: center; }
.orig { background: #fdf9f3; }
.cb { width: 18px; height: 18px; border: 2px solid #c8c8c8; background: #fff; display: flex; align-items: center; justify-content: center; margin-bottom: 3px; }
.cb svg { flex: none; }
.bottom-gap { flex: none; height: 61px; }

/* status */
.status { flex: none; height: 37px; background: #f0f0f0; border-top: 2px solid #bdbdbd; display: flex; align-items: flex-end; }
.si { height: 27px; display: flex; align-items: center; justify-content: center; border-right: 2px solid #b8c4d0; margin-bottom: 1px; white-space: nowrap; flex: none; }
.s0 { width: 182px; justify-content: flex-start; overflow: hidden; text-indent: -3px; }
.s1 { width: 359px; padding-right: 16px; }
.s2 { width: 371px; padding-right: 10px; }
.s3i { width: 136px; padding-right: 14px; }
.s4 { width: 137px; padding-right: 14px; }
.score { width: 119px; height: 32px; margin-left: 40px; background: #3fb3e3; color: #e6f5fc; display: flex; align-items: center; justify-content: center; border-radius: 2px 2px 0 0; }
.sright { margin-left: auto; width: 175px; height: 27px; border-left: 2px solid #b8c4d0; margin-bottom: 1px; display: flex; align-items: center; padding-left: 30px; gap: 34px; }
.sright svg { flex: none; margin-top: -2px; }

/* annotations */
.anno { position: absolute; }
.a1 { left: 329px; top: 1181px; }
.a2 { left: 1051px; top: 1193px; }
.note { position: absolute; color: #f5393c; font-size: 35.5px; line-height: 40px; font-weight: 300; white-space: nowrap; }
.n1 { left: 409px; top: 1223px; }
.n2 { left: 1151px; top: 1233px; }

/* dialog */
.dialog { position: absolute; left: 785px; top: 154px; width: 1288px; height: 779px; background: #f0f0f0; border: 2px solid #9a9a9a; display: flex; flex-direction: column; }
.dtitle { flex: none; height: 46px; background: #01a7ee; color: #e4f5fd; display: flex; align-items: center; padding-left: 16px; }
.dtitle svg { flex: none; }
.dname { margin-left: 8px; }
.dmax { margin-left: auto; }
.dclose { margin-left: 26px; margin-right: 22px; }
.dtabs { flex: none; height: 46px; display: flex; border-bottom: 2px solid #9bd48a; padding-top: 1px; }
.dtab { height: 43px; background: #fff; border-right: 2px solid #c8ebba; display: flex; align-items: center; justify-content: center; flex: none; padding-top: 2px; }
.dt0 { width: 118px; } .dt1 { width: 84px; } .dt2 { width: 84px; background: #82c46c; color: #fff; border-color: #82c46c; font-weight: 700; } .dt3 { width: 102px; } .dt4 { width: 120px; }
.dbtns { margin-left: auto; display: flex; gap: 9px; padding-right: 7px; padding-top: 3px; }
.dbtn { width: 127px; height: 36px; border: 2px solid #c4c4c4; background: #f2f2f2; display: flex; align-items: center; justify-content: center; }
.dbody { flex: none; height: 671px; display: flex; padding: 7px 6px 0 5px; gap: 4px; }
.dleft { width: 419px; flex: none; display: flex; flex-direction: column; gap: 6px; }
.field { height: 32px; border: 2px solid #d8d8d8; background: #fff; display: flex; align-items: center; padding-left: 4px; flex: none; }
.sel { justify-content: space-between; padding-right: 8px; }
.search { height: 31px; color: #a8a8a8; }
.tree { height: 597px; flex: none; border: 2px solid #a4a4a4; background: #fff; display: flex; overflow: hidden; }
.tree-list { flex: 1; margin-top: -1.5px; min-width: 0; overflow: hidden; }
.tnode { height: 31.5px; display: flex; align-items: center; white-space: pre; }
.tnode.on { color: #1e9bf0; }
.chev { width: 14px; margin-right: 13px; display: flex; justify-content: center; align-items: center; flex: none; }
.l0 { padding-left: 6px; } .l1 { padding-left: 36px; } .l2 { padding-left: 66px; } .l3 { padding-left: 96px; }
.tscroll { width: 25px; flex: none; border-left: 2px solid #c8c8c8; display: flex; flex-direction: column; }
.tbtn { height: 24px; flex: none; background: #fff; border-bottom: 2px solid #ddd; display: flex; align-items: center; justify-content: center; }
.tbtn:last-child { border-top: 2px solid #ddd; border-bottom: 0; }
.tbtn .tri { border-left-width: 7px; border-right-width: 7px; border-top-width: 8px; }
.ttrack { height: 296px; flex: none; background: #fff; border-bottom: 3px solid #b8b8b8; }
.tthumb { flex: 1; background: #c8c8c8; }

.dright { width: 850px; height: 660px; flex: none; border: 2px solid #a0a0a0; background: #fff; display: flex; flex-direction: column; }
.qtable { flex: 1; display: flex; min-height: 0; }
.qmain { width: 828px; flex: none; overflow: hidden; }
.q-grid { display: grid; grid-template-columns: 31px 119px 358px 90px 137px 93px; }
.qc { border-right: 2px solid #e2e2e2; display: flex; align-items: center; white-space: pre; min-width: 0; overflow: hidden; }
.qc:last-child { border-right: 0; }
.qhead { height: 31px; border-bottom: 2px solid #e2e2e2; }
.qhead .ctr { justify-content: center; }
.yname { background: #feecb4; border-bottom: 3px solid #3fb0e8; font-weight: 700; border-right: 0; }
.qhead .clipL { justify-content: flex-start; padding-left: 21px; overflow: hidden; }
.qrow { height: 39px; border-bottom: 2px solid #e2e2e2; }
.qno { justify-content: center; }
.qrow .ctr { justify-content: center; }
.qcode { padding-left: 3px; }
.qname { padding-left: 3px; }
.qnum { justify-content: flex-end; padding-right: 3px; }
.cur .qno { background: #feeab0; border-right: 2px solid #3fb0e8; font-weight: 700; }
.cur .qname { border: 3px solid #707070; margin: -1px 0 -2px; padding-left: 1px; }
.qv { width: 18px; flex: none; display: flex; flex-direction: column; background: #e0e0e0; }
.qvbtn { height: 19px; background: #fff; border: 1px solid #ddd; display: flex; align-items: center; justify-content: center; flex: none; }
.qvbtn .tri { border-left-width: 6px; border-right-width: 6px; border-top-width: 7px; }
.qvbtn .tri-u { border-left-width: 6px; border-right-width: 6px; border-bottom-width: 7px; }
.qvtrack { height: 459px; flex: none; }
.qvthumb { flex: 1; background: #c8c8c8; }
.qh { height: 20px; flex: none; display: flex; background: #e0e0e0; padding-left: 3px; }
.qhbtn { width: 18px; background: #fff; border: 1px solid #ddd; display: flex; align-items: center; justify-content: center; flex: none; }
.qhthumb { width: 631px; flex: none; background: #c8c8c8; border-radius: 0 3px 3px 0; }
.qhtrack { width: 157px; flex: none; }
.qhcorner { flex: 1; background: #f0f0f0; }
.dhandle { position: absolute; left: 764px; top: 759px; width: 128px; height: 11px; background: #82c46c; display: flex; justify-content: center; }
</style>

<style>
.lat {
  font-family: "Liberation Mono", monospace;
  font-size: 18px;
  letter-spacing: -1.8px;
  white-space: pre;
}
.dig {
  font-family: "Liberation Serif", serif;
  font-size: 18px;
  white-space: pre;
}
</style>
